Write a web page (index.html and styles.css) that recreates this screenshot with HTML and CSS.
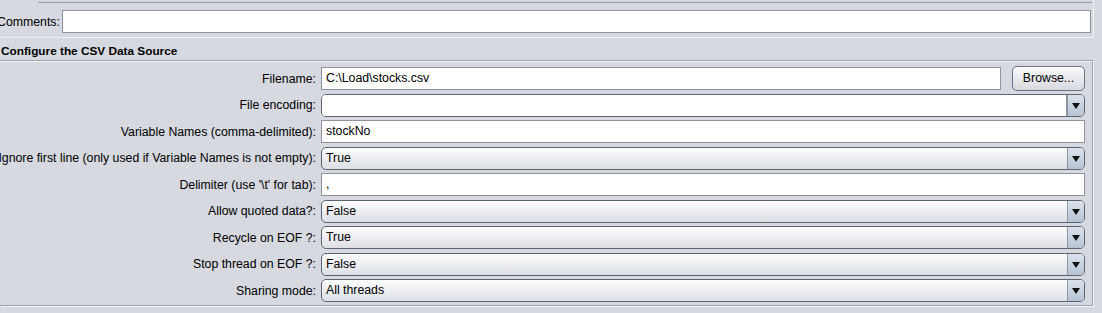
FILE: index.html
```html
<!DOCTYPE html>
<html>
<head>
<meta charset="utf-8">
<link rel="stylesheet" href="styles.css">
</head>
<body>
<div class="top-panel">
  <div class="name-edge"></div>
  <div class="comments-row">
    <span class="comments-label">Comments:</span>
    <div class="textfield comments-field"></div>
  </div>
</div>
<div class="section-title">Configure the CSV Data Source</div>
<div class="section">
  <div class="form">
    <label class="lbl">Filename:</label>
    <div class="field-with-btn">
      <div class="textfield file-field">C:\Load\stocks.csv</div>
      <div class="button">Browse...</div>
    </div>

    <label class="lbl">File encoding:</label>
    <div class="combo editable"><div class="combo-text white"></div><div class="arrow"></div></div>

    <label class="lbl">Variable Names (comma-delimited):</label>
    <div class="textfield">stockNo</div>

    <label class="lbl">Ignore first line (only used if Variable Names is not empty):</label>
    <div class="combo"><div class="combo-text">True</div><div class="arrow"></div></div>

    <label class="lbl">Delimiter (use '\t' for tab):</label>
    <div class="textfield">,</div>

    <label class="lbl">Allow quoted data?:</label>
    <div class="combo"><div class="combo-text">False</div><div class="arrow"></div></div>

    <label class="lbl">Recycle on EOF ?:</label>
    <div class="combo"><div class="combo-text">True</div><div class="arrow"></div></div>

    <label class="lbl">Stop thread on EOF ?:</label>
    <div class="combo"><div class="combo-text">False</div><div class="arrow"></div></div>

    <label class="lbl">Sharing mode:</label>
    <div class="combo"><div class="combo-text">All threads</div><div class="arrow"></div></div>
  </div>
</div>
</body>
</html>
```

FILE: styles.css
```css
html, body {
  margin: 0;
  padding: 0;
}
body {
  background: #d6d9df;
  font-family: "Liberation Sans", Arial, sans-serif;
  font-size: 12.3px;
  color: #000;
  width: 1102px;
  height: 313px;
  overflow: hidden;
}
.top-panel {
  width: 1094px;
  height: 38px;
  border-right: 1px solid #f2f3f5;
  border-bottom: 1px solid #f2f3f5;
  box-sizing: border-box;
}
.name-edge {
  margin-left: 38px;
  height: 2px;
  border-bottom: 1px solid #9a9ea6;
  margin-right: 1px;
}
.comments-row {
  display: flex;
  align-items: center;
  margin-top: 7px;
}
.comments-label {
  margin-left: -3px;
  width: 65px;
}
.comments-field {
  flex: 1;
  margin-right: 2px;
}
.textfield {
  background: #fff;
  border: 1px solid #8f939b;
  box-sizing: border-box;
  height: 23px;
  line-height: 21px;
  padding-left: 4px;
  white-space: pre;
}
.section-title {
  font-weight: bold;
  font-size: 11.8px;
  padding: 6px 0 0 1px;
  height: 15px;
  line-height: 15px;
}
.section {
  margin-top: 1px;
  width: 1093px;
  height: 246px;
  border-top: 1px solid #9ea2aa;
  border-right: 1px solid #9ea2aa;
  border-bottom: 1px solid #9ea2aa;
  box-sizing: border-box;
  box-shadow: inset 0 1px 0 #f4f5f7, 1px 1px 0 #f4f5f7;
}
.form {
  display: grid;
  grid-template-columns: 321px 764px;
  grid-auto-rows: 23px;
  row-gap: 3.5px;
  padding-top: 6px;
  align-items: center;
}
.lbl {
  text-align: right;
  padding-right: 5px;
  white-space: nowrap;
  justify-self: end;
}
.field-with-btn {
  display: flex;
  align-items: center;
  gap: 11px;
  height: 23px;
}
.file-field {
  width: 680px;
  flex: none;
}
.button {
  flex: none;
  width: 73px;
  height: 25px;
  box-sizing: border-box;
  border: 1px solid #6c7480;
  border-radius: 5px;
  background: linear-gradient(#fbfbfc, #e6e8ec 55%, #d6d9df);
  text-align: center;
  line-height: 23px;
}
.combo {
  display: flex;
  height: 23px;
  box-sizing: border-box;
  border: 1px solid #5d6470;
  border-radius: 5px;
  background: linear-gradient(#fdfdfe, #eceef1 50%, #dcdfe4);
  overflow: hidden;
}
.combo-text {
  flex: 1;
  padding-left: 4px;
  line-height: 21px;
}
.combo-text.white {
  background: #fff;
  border-right: 1px solid #8f939b;
}
.arrow {
  width: 16px;
  border-left: 1px solid #8d97a6;
  background: linear-gradient(#dbe3ec, #b6c3d3);
  position: relative;
}
.arrow::after {
  content: "";
  position: absolute;
  left: 4px;
  top: 8px;
  border-left: 4px solid transparent;
  border-right: 4px solid transparent;
  border-top: 6px solid #111;
}
```
